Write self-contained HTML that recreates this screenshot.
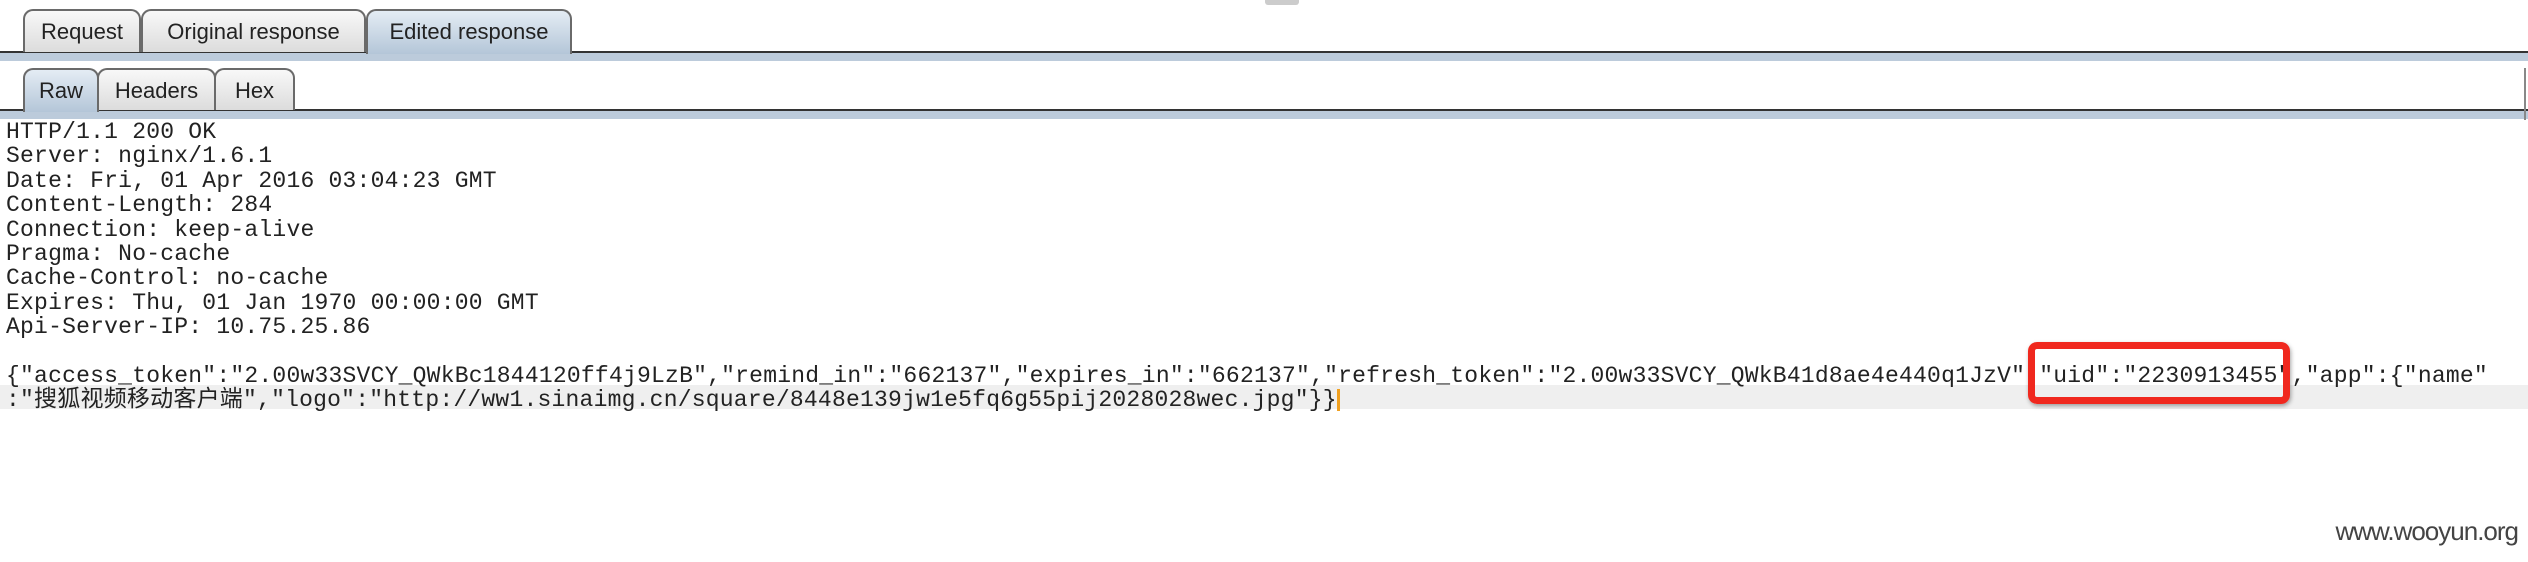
<!DOCTYPE html>
<html><head><meta charset="utf-8"><style>
html,body{margin:0;padding:0;width:2528px;height:562px;background:#fff;overflow:hidden;position:relative}
.tab{position:absolute;box-sizing:border-box;border:2px solid #6a6a6a;border-bottom:none;border-radius:10px 10px 0 0;background:linear-gradient(#f8f8f8,#dcdcdc);font:22px "Liberation Sans",sans-serif;color:#222;text-align:center}
.sel{background:linear-gradient(#e4ecf4,#b4c6d8)}
.line{position:absolute;left:0;width:2528px;height:2px;background:#333}
.band{position:absolute;left:0;width:2528px;background:#bccbdb}
pre{position:absolute;left:6px;margin:0;font:23px/24.4px "Liberation Mono","Noto Sans CJK SC",monospace;letter-spacing:0.22px;color:#222}
</style></head><body>
<div style="position:absolute;left:1265px;top:0;width:34px;height:5px;background:#ccc;border-radius:0 0 3px 3px"></div>
<div class="band" style="top:53px;height:8px"></div>
<div class="line" style="top:51px"></div>
<div class="tab" style="left:23px;top:9px;width:118px;height:43px;line-height:42px">Request</div>
<div class="tab" style="left:141px;top:9px;width:225px;height:43px;line-height:42px">Original response</div>
<div class="tab sel" style="left:366px;top:9px;width:206px;height:45px;line-height:42px">Edited response</div>
<div class="band" style="top:111px;height:8px"></div>
<div class="line" style="top:109px"></div>
<div class="tab sel" style="left:23px;top:68px;width:76px;height:44px;line-height:41px">Raw</div>
<div class="tab" style="left:97px;top:68px;width:119px;height:42px;line-height:41px">Headers</div>
<div class="tab" style="left:214px;top:68px;width:81px;height:42px;line-height:41px">Hex</div>
<div style="position:absolute;left:2524px;top:68px;width:2px;height:52px;background:#888"></div>
<div style="position:absolute;left:0;top:385px;width:2528px;height:24px;background:#efefef"></div>
<pre style="top:120px">HTTP/1.1 200 OK
Server: nginx/1.6.1
Date: Fri, 01 Apr 2016 03:04:23 GMT
Content-Length: 284
Connection: keep-alive
Pragma: No-cache
Cache-Control: no-cache
Expires: Thu, 01 Jan 1970 00:00:00 GMT
Api-Server-IP: 10.75.25.86

{"access_token":"2.00w33SVCY_QWkBc1844120ff4j9LzB","remind_in":"662137","expires_in":"662137","refresh_token":"2.00w33SVCY_QWkB41d8ae4e440q1JzV","uid":"2230913455","app":{"name"
:"搜狐视频移动客户端","logo":"http://ww1.sinaimg.cn/square/8448e139jw1e5fq6g55pij2028028wec.jpg"}}<span style="display:inline-block;width:3px;height:22px;background:#f0a020;vertical-align:middle"></span></pre>
<div style="position:absolute;left:2028px;top:342px;width:262px;height:62px;box-sizing:border-box;border:7px solid #f0281e;border-radius:9px;box-shadow:1px 2px 4px rgba(0,0,0,.35)"></div>
<div style="position:absolute;right:10px;top:516px;font:26px 'Liberation Sans',sans-serif;color:#444;letter-spacing:-1px">www.wooyun.org</div>
</body></html>
